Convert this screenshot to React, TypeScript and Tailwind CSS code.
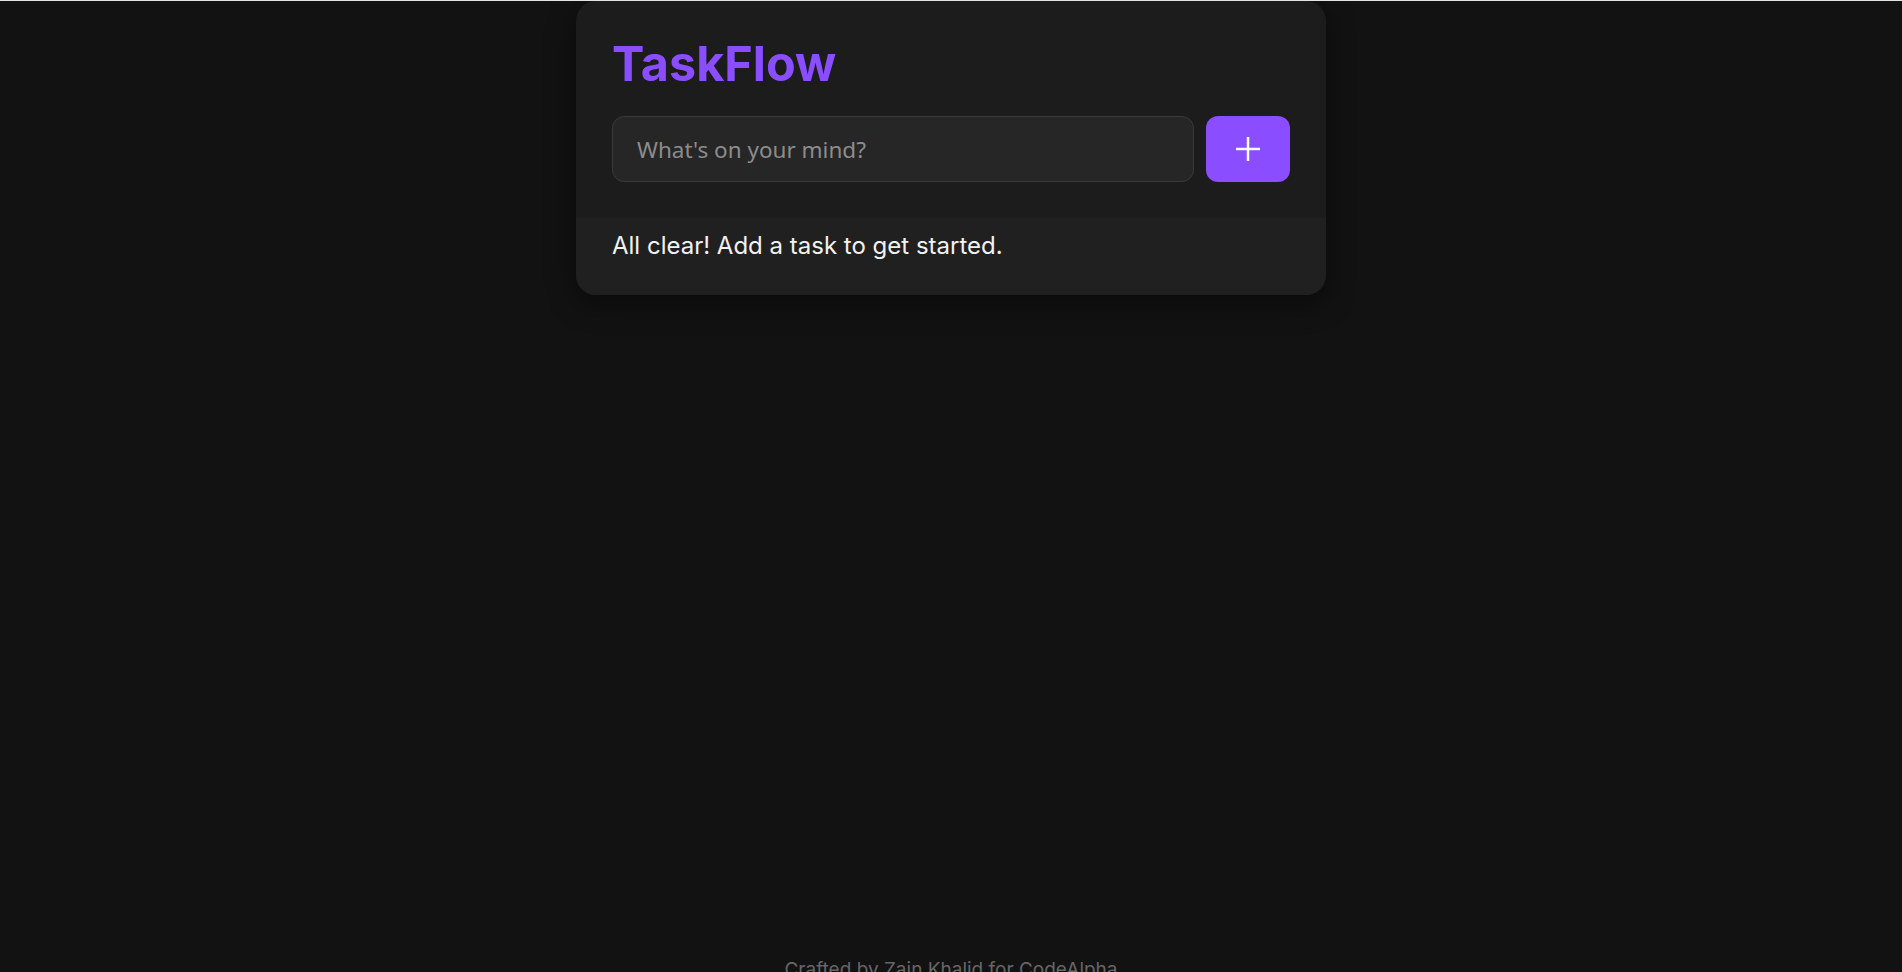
export default function App() {
  return (
    <div
      className="h-screen overflow-hidden bg-[#121212] flex flex-col items-center border-t border-[#e4e4e4]"
      style={{ fontFamily: 'Inter, "Noto Sans", sans-serif' }}
    >
      <div className="w-[750px] bg-[#1c1c1c] rounded-[20px] shadow-[0_8px_30px_rgba(0,0,0,0.45)] overflow-hidden">
        <div className="px-9 pt-[34px] pb-9">
          <h1 className="text-[48.5px] leading-[1.2] font-bold text-[#8a4dff]">TaskFlow</h1>
          <div className="mt-[23px] flex gap-3">
            <input
              type="text"
              placeholder="What's on your mind?"
              className="flex-1 h-[66px] rounded-xl border border-[#3a3a3a] bg-[#262626] px-6 text-[22.5px] text-white placeholder:text-[#8c8c8c] outline-none"
              style={{ fontFamily: '"Noto Sans", sans-serif' }}
            />
            <button className="w-[84px] h-[66px] rounded-xl bg-[#8a4dff] flex items-center justify-center text-white">
              <svg width="24" height="24" viewBox="0 0 24 24" stroke="currentColor" strokeWidth="2.5" fill="none">
                <line x1="12" y1="0" x2="12" y2="24" />
                <line x1="0" y1="12" x2="24" y2="12" />
              </svg>
            </button>
          </div>
        </div>
        <div className="bg-[#202020] px-9 pt-[10px] pb-[31px]">
          <p className="text-[24px] leading-9 text-[#f2f2f2]">All clear! Add a task to get started.</p>
        </div>
      </div>
      <footer className="mt-auto mb-[-12px] text-[19px] leading-[28px] text-[#666]">
        Crafted by Zain Khalid for CodeAlpha
      </footer>
    </div>
  )
}
